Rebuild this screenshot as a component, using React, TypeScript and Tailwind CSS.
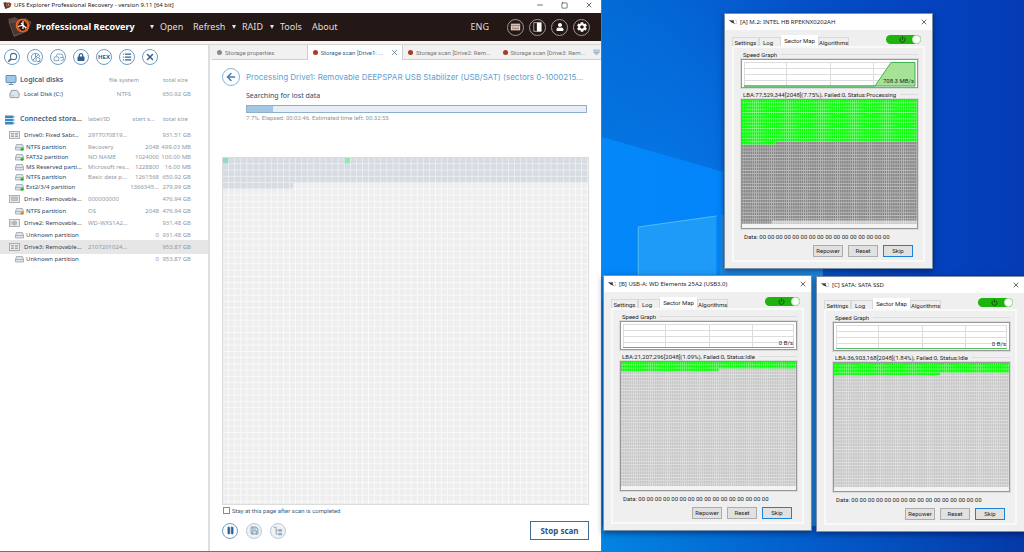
import type { ReactNode } from "react";
import {
  ArrowLeft, HardDrive, List, Minus, Monitor, Pause, Power, Save, Square, X,
} from "lucide-react";
import { FaLock, FaUser } from "react-icons/fa";
import { IoMdSettings } from "react-icons/io";

function Logo({ className }: { className: string }) {
  return (
    <svg viewBox="0 0 26 22" className={className} aria-hidden="true">
      <path d="M1 3l7-2 3 2 8-1 5 4-3 9-14 6z" fill="#5b4440" />
      <path d="M2 6l5 14 13-5 4-9z" fill="#4a3733" stroke="#7b625c" strokeWidth=".6" />
      <circle cx="15.500" cy="9.500" r="6" fill="#2a1512" stroke="#f0641e" strokeWidth="1.700" />
      <path d="M13 4l-3 6 4 5M18 14l3-5-4-5" fill="none" stroke="#f0641e" strokeWidth="1" />
      <path d="M16 5v8M16 9l-5 1.500M16 9l3 3M14 7l2 2" stroke="#fff" strokeWidth="1.200" fill="none" />
    </svg>
  );
}

function Round({ label, dim, dark, children }: { label: string; dim?: boolean; dark?: boolean; children: ReactNode }) {
  const tone = dark
    ? "size-[17px] border-[#a39493] text-white"
    : dim
      ? "size-4 border-[#b9cbd9] bg-[#eff1f3] text-[#8ba7be]"
      : "size-4 border-[#6f9dc3] text-[#2c6090]";
  return (
    <button type="button" aria-label={label} className={`flex shrink-0 items-center justify-center rounded-full border ${tone}`}>
      {children}
    </button>
  );
}

function FindIcon() {
  return (
    <svg viewBox="0 0 16 16" className="size-[11px]" fill="none" stroke="#3c7099" aria-hidden="true">
      <circle cx="9.500" cy="6.500" r="4.500" strokeWidth="1.500" />
      <path d="M6 10l-4 4" strokeWidth="2.600" />
    </svg>
  );
}

function PieIcon() {
  return (
    <svg viewBox="0 0 16 16" className="size-[11px]" fill="none" stroke="#5e8db5" strokeWidth="1.300" aria-hidden="true">
      <path d="M8 14A6 6 0 1 1 14 7M8 2v6l4-4M8 8l-4 4" />
      <circle cx="11.500" cy="11" r="3" />
      <path d="M13.500 13.500l2 2" />
    </svg>
  );
}

function DisksIcon() {
  return (
    <svg viewBox="0 0 16 16" className="size-[11px]" fill="none" stroke="#6f98bc" strokeWidth="1.200" aria-hidden="true">
      <path d="M5 6l1-3h7l2 5v4h-4M1.500 12.500V9l1-2h5l1 2v3.500zM10 8h5" />
    </svg>
  );
}

function TreeIcon() {
  return (
    <svg viewBox="0 0 16 16" className="size-[10px]" fill="none" stroke="currentColor" strokeWidth="1.500" aria-hidden="true">
      <path d="M1 2h4M5 2v11h3M5 7h3" />
      <path d="M9 5.500h5v3H9zM9 11.500h5v3H9z" fill="currentColor" strokeWidth=".8" />
    </svg>
  );
}

function DriveIcon({ mark }: { mark?: string }) {
  return (
    <svg viewBox="0 0 18 14" className="h-[7px] w-[9px] shrink-0" aria-hidden="true">
      <path d="M3 1h12l2 6v5H1V7z" fill="#dfe4e9" stroke="#8b99a6" strokeWidth="1.400" />
      <path d="M1 7h16" stroke="#8b99a6" strokeWidth="1.200" />
      {mark ? <circle cx="14" cy="10.500" r="3" fill={mark} /> : null}
    </svg>
  );
}

function BoxIcon({ kind }: { kind: number }) {
  return (
    <svg viewBox="0 0 22 16" className="h-2 w-[11px] shrink-0" aria-hidden="true">
      <rect x="1" y="1" width="20" height="14" fill="#eceded" stroke="#9a9fa4" strokeWidth="1.600" />
      {kind === 0 ? <path d="M4 4h6v3H4zM12 4h6v3h-6zM4 9h6v3H4zM12 9h6v3h-6z" fill="#a3a7ab" /> : null}
      {kind === 1 ? <path d="M5 4h12v7H5z" fill="#c3c6c9" stroke="#8e9398" /> : null}
      {kind === 2 ? <><circle cx="11" cy="8" r="5" fill="#b4b8bc" /><path d="M4 4v8" stroke="#a3a7ab" strokeWidth="1.500" /></> : null}
    </svg>
  );
}

type Row = { name: string; id?: string; start?: string; size: string; drive?: number; mark?: string; active?: boolean };

const rows: Row[] = [
  { name: "Drive0: Fixed Sabr...", id: "2977070819...", size: "931.51 GB", drive: 0 },
  { name: "NTFS partition", id: "Recovery", start: "2048", size: "499.03 MB", mark: "#28b428" },
  { name: "FAT32 partition", id: "NO NAME", start: "1024000", size: "100.00 MB", mark: "#28b428" },
  { name: "MS Reserved parti...", id: "Microsoft res...", start: "1228800", size: "16.00 MB" },
  { name: "NTFS partition", id: "Basic data p...", start: "1261568", size: "650.92 GB", mark: "#28b428" },
  { name: "Ext2/3/4 partition", start: "1366345...", size: "279.99 GB", mark: "#28b428" },
  { name: "Drive1: Removable...", id: "000000000", size: "476.94 GB", drive: 1 },
  { name: "NTFS partition", id: "OS", start: "2048", size: "476.94 GB", mark: "#e08a28" },
  { name: "Drive2: Removable...", id: "WD-WXS1A2...", size: "931.48 GB", drive: 2 },
  { name: "Unknown partition", start: "0", size: "931.48 GB" },
  { name: "Drive3: Removable...", id: "2107201024...", size: "953.87 GB", drive: 0, active: true },
  { name: "Unknown partition", start: "0", size: "953.87 GB" },
];

function Sidebar() {
  return (
    <aside className="w-[210px] shrink-0 border-r-2 border-[#dedede] bg-white">
      <div className="flex gap-[7px] px-1 pt-1">
        <Round label="Find"><FindIcon /></Round>
        <Round label="Scan disk"><PieIcon /></Round>
        <Round label="Open image"><DisksIcon /></Round>
        <Round label="Lock"><FaLock className="size-2" /></Round>
        <Round label="Hex viewer"><span className="text-[6px] font-bold">HEX</span></Round>
        <Round label="List"><List className="size-[10px]" strokeWidth={3} /></Round>
        <Round label="Close"><X className="size-[10px]" strokeWidth={3.500} /></Round>
      </div>
      <table className="mt-2 w-full table-fixed border-collapse text-[6px] text-[#8f99a4]">
        <colgroup><col className="w-[104px]" /><col className="w-[40px]" /><col /></colgroup>
        <thead>
          <tr className="h-[14px]">
            <th className="p-0 pl-[5px] text-left">
              <span className="flex items-center gap-[3px] text-[7px] font-semibold text-[#41607f]">
                <Monitor className="size-3 fill-[#9ccbea] text-[#6d8ca5]" strokeWidth={2} />Logical disks
              </span>
            </th>
            <th className="p-0 text-center font-normal whitespace-nowrap">file system</th>
            <th className="p-0 pr-5 text-right font-normal">total size</th>
          </tr>
        </thead>
        <tbody>
          <tr className="h-[14px]">
            <td className="p-0 pl-[9px]">
              <span className="flex items-center gap-1 text-[6px] text-[#2a4663]">
                <HardDrive className="h-3 w-[11px] fill-[#dfe4e9] text-[#8b99a6]" />Local Disk (C:)
              </span>
            </td>
            <td className="p-0 text-center">NTFS</td>
            <td className="p-0 pr-[17px] text-right whitespace-nowrap">650.92 GB</td>
          </tr>
        </tbody>
      </table>
      <table className="mt-[10px] w-full table-fixed border-collapse text-[6px] text-[#8f99a4]">
        <colgroup><col className="w-[88px]" /><col className="w-[40px]" /><col className="w-[31px]" /><col /></colgroup>
        <thead>
          <tr className="h-[17px]">
            <th className="p-0 pl-[5px] text-left">
              <span className="flex items-center gap-[5px] text-[7px] font-semibold whitespace-nowrap text-[#41607f]">
                <svg viewBox="0 0 20 18" className="h-[10px] w-[10px] shrink-0" aria-hidden="true">
                  <path d="M0 0h17v5H0zM0 6.500h17v5H0zM0 13h17v5H0z" fill="#3d87bd" />
                  <path d="M17 3h3M17 9h3M17 15h3" stroke="#7fb3d6" strokeWidth="2" />
                </svg>
                Connected stora...
              </span>
            </th>
            <th className="p-0 text-left font-normal">label/ID</th>
            <th className="p-0 text-center font-normal whitespace-nowrap">start s...</th>
            <th className="p-0 pr-5 text-right font-normal">total size</th>
          </tr>
        </thead>
        <tbody>
          {rows.map((r, i) => {
            const isDrive = r.drive !== undefined;
            return (
              <tr key={i} className={`${isDrive ? "h-[14px]" : "h-[10px]"} ${r.active ? "bg-[#e6e6e6]" : ""}`}>
                <td className={`p-0 ${isDrive ? "pl-[9px]" : "pl-[15px]"}`}>
                  <span className={`flex items-center leading-[9px] whitespace-nowrap text-[#2a4663] ${isDrive ? "gap-1" : "gap-[2px]"}`}>
                    {isDrive ? <BoxIcon kind={r.drive!} /> : <DriveIcon mark={r.mark} />}
                    {r.name}
                  </span>
                </td>
                <td className="p-0 leading-[9px] whitespace-nowrap">{r.id}</td>
                <td className="p-0 text-right leading-[9px] whitespace-nowrap">{r.start}</td>
                <td className="p-0 pr-[17px] text-right leading-[9px] whitespace-nowrap">{r.size}</td>
              </tr>
            );
          })}
        </tbody>
      </table>
    </aside>
  );
}

function ScanMap() {
  return (
    <svg viewBox="0 0 366 346" preserveAspectRatio="none" className="min-h-0 w-full flex-1 border border-[#dcdcdc]" role="img" aria-label="Scan map">
      <defs>
        <pattern id="cellFree" width="6.100" height="6.250" patternUnits="userSpaceOnUse">
          <rect width="6.100" height="6.250" fill="#fafafa" /><rect width="5.200" height="5.300" fill="#eeeeee" />
        </pattern>
        <pattern id="cellDone" width="6.100" height="6.250" patternUnits="userSpaceOnUse">
          <rect width="6.100" height="6.250" fill="#edf0f3" /><rect width="5.300" height="5.400" fill="#d7dce2" />
        </pattern>
      </defs>
      <rect width="366" height="346" fill="url(#cellFree)" />
      <path d="M0 0h366v25H0zM0 25h70.500v6.250H0z" fill="url(#cellDone)" />
      <rect width="5.300" height="5.400" fill="#8fdcc0" />
      <rect x="122" width="5.300" height="5.400" fill="#93e8ab" />
    </svg>
  );
}

function DocTab({ text, active, grey }: { text: string; active?: boolean; grey?: boolean }) {
  return (
    <button
      type="button"
      role="tab"
      aria-selected={!!active}
      className={`flex min-w-0 flex-1 items-center gap-[3px] pl-[5px] text-left font-['Roboto',sans-serif] text-[6px] whitespace-nowrap ${active ? "border-x border-[#cfcfcf] bg-white text-[#2f5f93]" : "border-b border-[#cfcfcf] text-[#777]"}`}
    >
      <span className={`size-[5px] shrink-0 rounded-full ${grey ? "bg-[#8b8b8b]" : "bg-[#a83a28]"}`} />
      <span className="flex-1">{text}</span>
      {active ? <X className="mr-[3px] size-[9px] text-[#5d7591]" /> : null}
    </button>
  );
}

function Caret() {
  return (
    <svg viewBox="0 0 6 6" className="mr-[6px] size-1" aria-hidden="true"><path d="M0 0h6L3 6z" fill="#e8e3e2" /></svg>
  );
}

function Explorer() {
  return (
    <section className="flex h-screen w-[602px] shrink-0 flex-col border-r border-b border-[#2f86bd] bg-white">
      <div className="flex h-[13px] shrink-0 items-center gap-[2px] pb-[3px] pl-[3px] text-[6px] text-[#222]">
        <Logo className="size-[9px]" />
        <span>UFS Explorer Professional Recovery - version 9.11 [64 bit]</span>
        <span className="ml-auto flex items-center gap-[17px] pr-2">
          <button type="button" aria-label="Minimize"><Minus className="size-2" /></button>
          <button type="button" aria-label="Maximize"><Square className="size-[7px]" /></button>
          <button type="button" aria-label="Close"><X className="size-2" /></button>
        </span>
      </div>
      <header className="flex h-[28px] shrink-0 items-center bg-[#231815] pr-[11px] pl-[7px] text-[9px] text-[#e2dddc]">
        <Logo className="h-[22px] w-[26px]" />
        <h1 className="w-[117px] pl-[3px] text-[9px] font-bold whitespace-nowrap text-white">Professional Recovery</h1>
        <nav className="flex items-center whitespace-nowrap">
          <Caret /><button type="button" className="w-[33px] text-left">Open</button>
          <button type="button" className="w-[39px] text-left">Refresh</button>
          <Caret /><button type="button" className="w-[28px] text-left">RAID</button>
          <Caret /><button type="button" className="w-[32px] text-left">Tools</button>
          <button type="button">About</button>
        </nav>
        <button type="button" className="mr-[18px] ml-auto">ENG</button>
        <div className="flex gap-[5px]">
          <Round dark label="Keyboard">
            <svg viewBox="0 0 16 12" className="h-2 w-[11px]" aria-hidden="true"><path d="M1 1h14v10H1z" fill="#e8cfc7" /><path d="M1 3.500h14M3 6h2M7 6h2M11 6h2M3 8.500h10" stroke="#7d6059" strokeWidth="1.200" /></svg>
          </Round>
          <Round dark label="Panels">
            <svg viewBox="0 0 14 16" className="h-[10px] w-[9px]" aria-hidden="true"><path d="M1 1h12v14H1z" fill="none" stroke="#b5aaa8" strokeWidth="1.400" /><path d="M6 1h7v14H6z" fill="#fff" /></svg>
          </Round>
          <Round dark label="Account"><FaUser className="size-2" /></Round>
          <Round dark label="Settings"><IoMdSettings className="size-3" /></Round>
        </div>
      </header>
      <div className="h-1 shrink-0 border-b border-[#d6d6d6] bg-[#f4f2f2]" />
      <div className="flex min-h-0 flex-1">
        <Sidebar />
        <main className="flex min-w-0 flex-1 flex-col">
          <div role="tablist" className="flex h-[15px] shrink-0 bg-[#f1f1f1] pl-[2px]">
            <DocTab grey text="Storage properties" />
            <DocTab active text="Storage scan [Drive1: ..." />
            <DocTab text="Storage scan [Drive2: Rem..." />
            <DocTab text="Storage scan [Drive3: Rem..." />
            <button type="button" aria-label="All tabs" className="flex w-[9px] items-center justify-center border-b border-[#cfcfcf]">
              <svg viewBox="0 0 12 12" className="size-[7px]" aria-hidden="true"><path d="M0 2h12M1 5h10l-5 5z" fill="#b8cbdc" stroke="#7d9bb8" strokeWidth="1.300" /></svg>
            </button>
          </div>
          <div className="flex min-h-0 flex-1 flex-col px-3 pt-2 pb-[11px]">
            <div className="flex items-center gap-[6px]">
              <button type="button" aria-label="Back" className="flex size-[18px] shrink-0 items-center justify-center rounded-full border border-[#8bb4d6] text-[#3e7cb0]"><ArrowLeft className="size-3" strokeWidth={3} /></button>
              <h2 className="font-['Inter',sans-serif] text-[8px] whitespace-nowrap text-[#5e9fd2]">Processing Drive1: Removable DEEPSPAR USB Stabilizer (USB/SAT) (sectors 0-1000215...</h2>
            </div>
            <div className="pr-[2px] pl-6 text-[#2c4a68]">
              <p className="mt-1 text-[7px] leading-[12px]">Searching for lost data</p>
              <div role="progressbar" aria-label="Scan progress" aria-valuenow={7} className="mt-[3px] h-2 border border-[#8eb0ce] bg-[#e7eef6]">
                <div className="h-full w-[26px] bg-[#a3c6e2]" />
              </div>
              <p className="mt-[1px] font-['Roboto',sans-serif] text-[6px] leading-[8px] text-[#8b96a1]">7.7%. Elapsed: 00:02:46. Estimated time left: 00:32:55</p>
            </div>
            <div className="mt-[35px] flex min-h-0 flex-1 flex-col"><ScanMap /></div>
            <label className="mt-[1px] flex items-center gap-[2px] font-['Roboto',sans-serif] text-[6px] leading-[9px] text-[#3c5c7c]">
              <input type="checkbox" className="ml-[1px] size-[7px] appearance-none border border-[#7390ab] bg-white" />
              Stay at this page after scan is completed
            </label>
            <div className="mt-[6px] flex items-center gap-2">
              <Round label="Pause"><Pause className="size-[9px] fill-current" strokeWidth={1.500} /></Round>
              <Round dim label="Save"><Save className="size-[9px]" strokeWidth={3} /></Round>
              <Round dim label="Tree"><TreeIcon /></Round>
              <button type="button" className="ml-auto h-[19px] w-[59px] border border-[#3f6d9c] text-[8px] font-bold text-[#2a5480]">Stop scan</button>
            </div>
          </div>
        </main>
      </div>
    </section>
  );
}

type ToolProps = { id: string; place: string; title: string; speed: string; status: string; full: number; part: number; busy?: boolean };

function SectorMap({ id, full, part, busy }: { id: string; full: number; part: number; busy?: boolean }) {
  const y = full * 3.22;
  return (
    <svg viewBox="0 0 175 128" preserveAspectRatio="none" className="h-[130px] w-full border border-[#989898] bg-[#f4f4f4] ring-1 ring-[#dadada]" role="img" aria-label="Sector map">
      <defs>
        <pattern id={`${id}g`} width="2.130" height="3.220" patternUnits="userSpaceOnUse">
          <rect width="2.130" height="3.220" fill="#8cf98c" /><rect width="1.600" height="2.500" fill="#00ff00" />
        </pattern>
        <pattern id={`${id}d`} width="2.130" height="3.220" patternUnits="userSpaceOnUse">
          <rect width="2.130" height="3.220" fill="#bcbcbc" /><rect width="1.500" height="2.400" fill="#858585" />
        </pattern>
        <pattern id={`${id}l`} width="2.130" height="3.220" patternUnits="userSpaceOnUse">
          <rect width="2.130" height="3.220" fill="#e0e0e0" /><rect width="1.500" height="2.400" fill="#c6c6c6" />
        </pattern>
      </defs>
      <rect width="175" height="124" fill={`url(#${id}l)`} />
      {busy ? <path d="M0 0h175v120.500H0zM0 120.500h30v3H0z" fill={`url(#${id}d)`} /> : null}
      <path d={`M0 0h175v${y}H0zM0 ${y}h${part}v3H0z`} fill={`url(#${id}g)`} />
    </svg>
  );
}

function GroupLabel({ text }: { text: string }) {
  return (
    <p className="flex items-center gap-1 pl-[2px] leading-[9px] whitespace-nowrap after:h-px after:flex-1 after:bg-[#dcdcdc]">{text}</p>
  );
}

function ToolWindow({ id, place, title, speed, status, full, part, busy }: ToolProps) {
  const btn = "h-3 w-[30px] border bg-[#e1e1e1] text-center leading-[8px]";
  return (
    <section className={`absolute w-[209px] border border-[#7a8fa8] bg-[#efefef] font-['Roboto',sans-serif] text-[6px] text-[#1f1f1f] shadow-[0_2px_6px_rgba(0,0,40,0.5)] ${place}`}>
      <div className="flex h-4 items-center gap-[3px] bg-white px-1 font-['Noto_Sans',sans-serif]">
        <svg viewBox="0 0 16 12" className="h-[6px] w-2" aria-hidden="true"><path d="M0 2l6 1 4-1-1 3 3 5-4-2-3-1z" fill="#333" /><path d="M12 2a4 4 0 0 1 0 8" stroke="#999" fill="none" /></svg>
        <span className="whitespace-nowrap">{title}</span>
        <button type="button" aria-label="Close" className="ml-auto"><X className="size-2" /></button>
      </div>
      <div className="px-[7px] pt-1 pb-[6px]">
        <div className="flex h-3 items-end">
          <div role="tablist" className="flex items-end">
            <button type="button" role="tab" aria-selected={false} className="h-[9px] w-[27px] border border-b-0 border-[#d9d9d9] leading-[7px]">Settings</button>
            <button type="button" role="tab" aria-selected={false} className="h-[9px] w-[22px] border border-b-0 border-[#d9d9d9] pr-1 leading-[7px]">Log</button>
            <button type="button" role="tab" aria-selected className="h-[11px] w-[37px] bg-white leading-[8px] whitespace-nowrap">Sector Map</button>
            <button type="button" role="tab" aria-selected={false} className="h-[9px] w-[31px] border border-b-0 border-[#d9d9d9] leading-[7px]">Algorithms</button>
          </div>
          <button type="button" role="switch" aria-checked aria-label="Power" className="mr-1 mb-[2px] ml-auto flex h-[9px] w-[35px] items-center justify-end gap-[6px] rounded-full bg-[#1fb30f]">
            <Power className="size-[7px] text-[#0a4a05]" strokeWidth={3} />
            <span className="size-[9px] rounded-full border border-[#bfe6ba] bg-white" />
          </button>
        </div>
        <div className="border-2 border-[#f9f9f9] pt-[2px] pr-[5px] pb-[3px] pl-[7px]">
          <GroupLabel text="Speed Graph" />
          <div className="relative border border-[#989898] bg-white ring-1 ring-[#dadada]">
            <svg viewBox="0 0 175 27" preserveAspectRatio="none" className="h-[27px] w-full" aria-hidden="true">
              <path d="M2 2.500h171M2 8.500h171M2 14.500h171M2 20.500h171M2.500 2v24M44.500 2v24M88.500 2v24M131.500 2v24M172.500 2v24" stroke="#dcdcdc" strokeWidth="1" />
              {busy
                ? <path d="M2 26h131L149 2.500h24V26z" fill="#a6e396" stroke="#3fb350" strokeWidth="1" />
                : <path d="M2 25.500h171" stroke="#55bb62" strokeWidth="1" />}
            </svg>
            <span className="absolute right-[3px] bottom-[2px] leading-[8px]">{speed}</span>
          </div>
          <div className="mt-[2px]"><GroupLabel text={status} /></div>
          <SectorMap id={id} full={full} part={part} busy={busy} />
          <p className="mt-[3px] pl-[3px] leading-[9px] whitespace-nowrap">Data: 00 00 00 00 00 00 00 00 00 00 00 00 00 00 00 00</p>
          <div className="mt-[4px] flex justify-end gap-[5px] pr-[5px]">
            <button type="button" className={`${btn} border-[#adadad]`}>Repower</button>
            <button type="button" className={`${btn} border-[#adadad]`}>Reset</button>
            <button type="button" className={`${btn} border-[#1a83d8]`}>Skip</button>
          </div>
        </div>
      </div>
    </section>
  );
}

function Wallpaper() {
  return (
    <svg viewBox="0 0 424 552" preserveAspectRatio="none" className="h-full w-full" aria-hidden="true">
      <defs>
        <linearGradient id="sky" x1="0" x2="1" y1="0" y2="0">
          <stop offset="0" stopColor="#0268d2" /><stop offset=".3" stopColor="#0558cc" /><stop offset=".8" stopColor="#0442bd" /><stop offset="1" stopColor="#043cb6" />
        </linearGradient>
        <linearGradient id="beam" x1="0" x2="1" y1="0" y2="0">
          <stop offset="0" stopColor="#0388f8" /><stop offset="1" stopColor="#0484fb" />
        </linearGradient>
        <linearGradient id="floor" x1="0" x2="1" y1="0" y2="0">
          <stop offset="0" stopColor="#0384e2" /><stop offset=".55" stopColor="#0458c8" /><stop offset="1" stopColor="#0539a8" />
        </linearGradient>
        <radialGradient id="halo" cx=".15" cy=".4" r=".5">
          <stop offset="0" stopColor="#0680ee" stopOpacity=".8" /><stop offset="1" stopColor="#0680ee" stopOpacity="0" />
        </radialGradient>
      </defs>
      <rect width="424" height="552" fill="url(#sky)" />
      <rect width="424" height="552" fill="url(#halo)" />
      <path d="M0 137L122 172V300H0z" fill="url(#beam)" />
      <path d="M36 227L115 216V552H36z" fill="#1e9af8" />
      <path d="M119 215L222 202V552H119z" fill="#1d8fe6" />
      <path d="M36.500 300V227L115 216" stroke="#4fbcf8" fill="none" />
      <rect y="526" width="424" height="26" fill="url(#floor)" />
    </svg>
  );
}

export default function App() {
  return (
    <div className="relative flex h-screen w-full overflow-hidden bg-[#0546bd] font-['Noto_Sans',sans-serif]">
      <Explorer />
      <div className="min-w-0 flex-1"><Wallpaper /></div>
      <ToolWindow id="a" place="left-[724px] top-[13px]" title="[A] M.2: INTEL HB RPEKNX0202AH" speed="708.3 MB/s" status="LBA:77,529,344[2048](7.75%), Failed:0, Status:Processing" full={13} part={34} busy />
      <ToolWindow id="b" place="left-[603px] top-[275px]" title="[B] USB-A: WD Elements 25A2 (USB3.0)" speed="0 B/s" status="LBA:21,207,296[2048](1.09%), Failed:0, Status:Idle" full={2} part={98} />
      <ToolWindow id="c" place="left-[816px] top-[276px]" title="[C] SATA: SATA SSD" speed="0 B/s" status="LBA:36,903,168[2048](1.84%), Failed:0, Status:Idle" full={3} part={106} />
    </div>
  );
}
